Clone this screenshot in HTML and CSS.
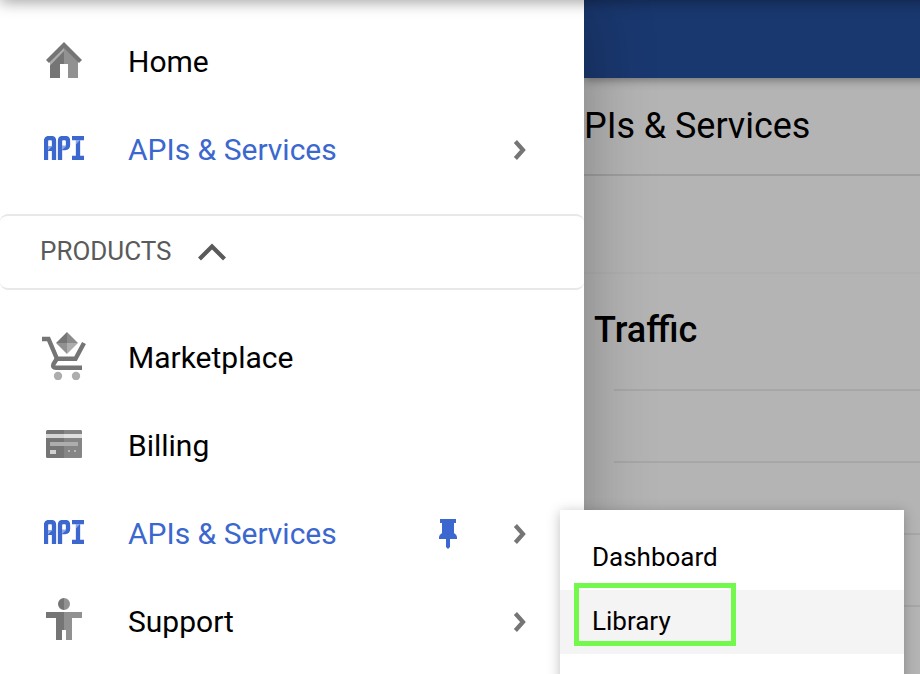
FILE: index.html
```html
<!DOCTYPE html>
<html lang="en">
<head>
<meta charset="utf-8">
<title>APIs &amp; Services</title>
<link rel="stylesheet" href="styles.css">
</head>
<body>
<svg class="defs" width="0" height="0">
  <symbol id="api" viewBox="0 0 40 24">
    <path d="M2 24V5Q2 2 5 2H7Q10 2 10 5V24M16 24V5Q16 2 19 2H21Q24 2 24 5V9Q24 12 21 12H16M28 2H40M34 2V22M28 22H40" fill="none" stroke="#3b67cf" stroke-width="4.300"/>
    <path d="M3 10H9V15H3Z" fill="#3b67cf"/>
    <path d="M4 10H8.500L4 14.500ZM18 10H22.500L18 14ZM32 4H36L32 8.500Z" fill="#8ea8e3"/>
  </symbol>
  <symbol id="chev" viewBox="0 0 14 22">
    <path d="M2.400 2.500L10 11L2.400 19.500" fill="none" stroke="#757575" stroke-width="4.200"/>
  </symbol>
</svg>
<div class="app">
  <nav class="drawer">
    <div class="group">
      <a class="row"><span class="icon"><svg width="36" height="36" viewBox="0 0 36 36"><path d="M4 18L18 5V22H14V36H4Z" fill="#757575"/><path d="M18 5L32 18V36H22V22H18Z" fill="#919191"/><path d="M4 19L18 5V9L4 23.500Z" fill="#adadad"/><path d="M1.500 19.500L18 3L34.500 19.500" fill="none" stroke="#757575" stroke-width="4.200"/></svg></span><span class="label">Home</span></a>
      <a class="row active"><span class="icon"><svg class="api" width="40" height="24"><use href="#api"/></svg></span><span class="label">APIs &amp; Services</span><svg class="chev" width="14" height="22"><use href="#chev"/></svg></a>
    </div>
    <div class="section"><span>PRODUCTS</span><svg width="28" height="18" viewBox="0 0 28 18"><path d="M1.500 16L14 3.500L26.500 16" fill="none" stroke="#5a5a5a" stroke-width="4.200"/></svg></div>
    <div class="group products">
      <a class="row"><span class="icon"><svg width="44" height="48" viewBox="0 0 44 48"><path d="M0 7H6.500L15 26.800H33.500L42 11" fill="none" stroke="#757575" stroke-width="4.400"/><path d="M15 26.500L11.500 32Q10 35.800 14 35.800H40" fill="none" stroke="#757575" stroke-width="4.400"/><path d="M25 0L14 11H25Z" fill="#757575"/><path d="M25 0L36 11H25Z" fill="#8b8b8b"/><path d="M14 11H25V22Z" fill="#919191"/><path d="M36 11H25V22Z" fill="#adadad"/><circle cx="16" cy="44" r="4.200" fill="#adadad"/><circle cx="34" cy="44" r="4.200" fill="#adadad"/></svg></span><span class="label">Marketplace</span></a>
      <a class="row"><span class="icon"><svg width="36" height="28" viewBox="0 0 36 28"><rect width="36" height="28" rx="1.500" fill="#757575"/><path d="M18 0H34.500L36 1.500V26.500L34.500 28H18Z" fill="#858585"/><path d="M0 4H18V8H0Z" fill="#d5d5d5"/><path d="M18 4H36V8H18Z" fill="#e0e0e0"/><path d="M4 12H32V16H4Z" fill="#adadad"/><path d="M4 20H10V24H4Z" fill="#d0d0d0"/><path d="M22 20H24V22H22ZM28 20H30V22H28Z" fill="#b8b8b8"/></svg></span><span class="label">Billing</span></a>
      <a class="row active"><span class="icon"><svg class="api" width="40" height="24"><use href="#api"/></svg></span><span class="label">APIs &amp; Services</span><svg class="pin" width="18" height="30" viewBox="0 0 18 30"><path d="M1 0H17V4H15V14Q18 16 18 18V20H11V28L9 30L7 28V20H0V18Q0 16 3 14V4H1Z" fill="#3b67cf"/></svg><svg class="chev" width="14" height="22"><use href="#chev"/></svg></a>
      <a class="row"><span class="icon"><svg class="person" width="36" height="42" viewBox="0 0 36 42"><path d="M18 0A6 6 0 0 0 18 12ZM0 14H18V32H16V42H10V20H0Z" fill="#757575"/><path d="M18 0A6 6 0 0 1 18 12ZM36 14H18V32H20V42H26V20H36Z" fill="#919191"/></svg></span><span class="label">Support</span><svg class="chev" width="14" height="22"><use href="#chev"/></svg></a>
    </div>
  </nav>
  <main class="page">
    <header class="topbar"></header>
    <h1 class="title">PIs &amp; Services</h1>
    <div class="toolbar"></div>
    <h2 class="heading">Traffic</h2>
    <div class="chart"><i></i><i></i><i></i><i></i></div>
  </main>
  <div class="topshade"></div>
  <div class="menu">
    <a class="item">Dashboard</a>
    <a class="item hover">Library</a>
    <div class="marker"></div>
  </div>
</div>
</body>
</html>
```
FILE: styles.css
```css
* { box-sizing: border-box; }
body { margin: 0; font-family: Roboto, sans-serif; color: #000; }
.defs { position: absolute; }
.app { position: relative; display: flex; width: 920px; height: 674px; overflow: hidden; background: #b4b4b4; }
.drawer { position: relative; z-index: 1; flex: none; width: 584px; height: 674px; background: #fff; box-shadow: 0 0 64px rgba(0, 0, 0, .3); padding-top: 18px; }
.group { height: 196px; }
.products { padding-top: 24px; height: auto; }
.row { display: flex; align-items: center; height: 88px; padding: 0 57px 0 40px; font-size: 30px; line-height: 36px; }
.icon { display: flex; justify-content: center; width: 48px; margin-right: 40px; padding-bottom: 4px; }
.label { flex: 1; }
.active .label { color: #3b67cf; }
.person { margin-bottom: 2px; }
.pin { margin-right: 56px; }
.section { display: flex; align-items: center; gap: 26px; height: 76px; padding: 0 40px; border: 2px solid #e8e8e8; border-width: 2px 0; border-radius: 8px; color: #5a5a5a; font-size: 26px; }
.section span { padding-bottom: 2px; }
.page { flex: 1; min-width: 0; }
.topbar { height: 78px; margin-right: -20px; background: #1a3870; box-shadow: 0 1px 10px rgba(0, 0, 0, .45); }
.title { margin: 0; height: 98px; line-height: 96px; font-size: 36px; font-weight: 400; letter-spacing: -.05px; border-bottom: 2px solid #9f9f9f; }
.toolbar { height: 98px; border-bottom: 2px solid #b0b0b0; }
.heading { margin: 0 0 0 10px; height: 115px; line-height: 113px; font-size: 36px; font-weight: 500; }
.chart { margin-left: 30px; }
.chart i { display: block; height: 72px; border-top: 2px solid #a7a7a7; }
.topshade { position: absolute; z-index: 2; top: -10px; left: 0; right: -20px; height: 10px; box-shadow: 0 0 16px rgba(0, 0, 0, .55); }
.menu { position: absolute; z-index: 3; left: 560px; top: 510px; width: 344px; height: 180px; padding-top: 16px; background: #fff; box-shadow: 0 2px 12px rgba(0, 0, 0, .25); }
.item { display: block; height: 64px; padding-left: 32px; line-height: 63px; font-size: 26px; }
.hover { background: #f4f4f4; }
.marker { position: absolute; left: 14px; top: 73px; width: 162px; height: 63px; border: 5px solid #73f84c; }
```
